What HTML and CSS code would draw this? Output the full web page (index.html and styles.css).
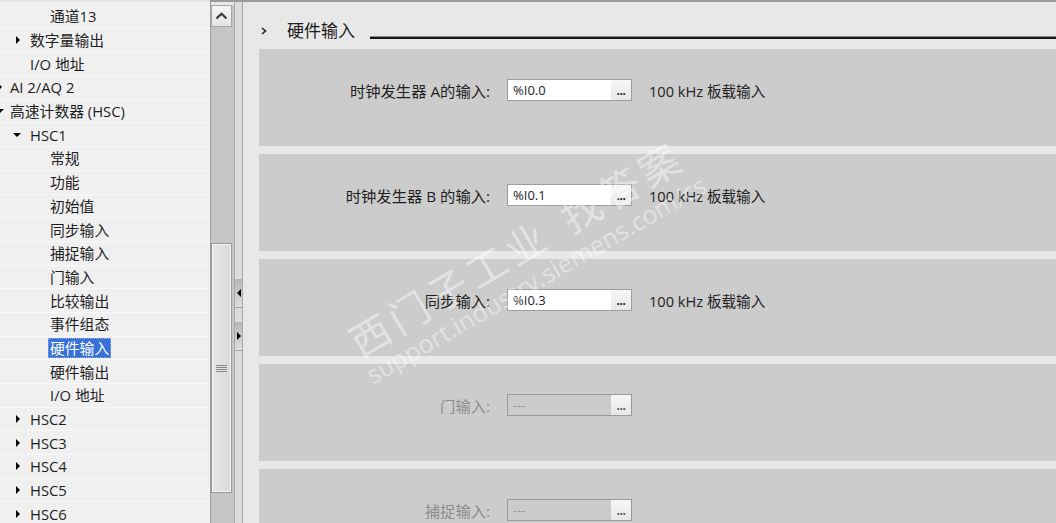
FILE: index.html
```html
<!DOCTYPE html>
<html lang="zh">
<head>
<meta charset="utf-8">
<title>硬件输入</title>
<link rel="stylesheet" href="styles.css">
</head>
<body>
<div class="topbar"><div class="topbar-left"></div><div class="topbar-right"></div></div>
<div class="app">
  <div class="tree">
    <div class="tree-inner">
      <div class="row l2"><span class="tog"></span><span class="txt">通道13</span></div>
      <div class="row l1"><span class="tog"><i class="tri-r"></i></span><span class="txt">数字量输出</span></div>
      <div class="row l1"><span class="tog"></span><span class="txt">I/O 地址</span></div>
      <div class="row l0"><span class="tog"><i class="tri-r"></i></span><span class="txt">AI 2/AQ 2</span></div>
      <div class="row l0"><span class="tog"><i class="tri-d"></i></span><span class="txt">高速计数器 (HSC)</span></div>
      <div class="row l1"><span class="tog"><i class="tri-d"></i></span><span class="txt">HSC1</span></div>
      <div class="row l2"><span class="tog"></span><span class="txt">常规</span></div>
      <div class="row l2"><span class="tog"></span><span class="txt">功能</span></div>
      <div class="row l2"><span class="tog"></span><span class="txt">初始值</span></div>
      <div class="row l2"><span class="tog"></span><span class="txt">同步输入</span></div>
      <div class="row l2"><span class="tog"></span><span class="txt">捕捉输入</span></div>
      <div class="row l2"><span class="tog"></span><span class="txt">门输入</span></div>
      <div class="row l2"><span class="tog"></span><span class="txt">比较输出</span></div>
      <div class="row l2"><span class="tog"></span><span class="txt">事件组态</span></div>
      <div class="row l2"><span class="tog"></span><span class="txt selected">硬件输入</span></div>
      <div class="row l2"><span class="tog"></span><span class="txt">硬件输出</span></div>
      <div class="row l2"><span class="tog"></span><span class="txt">I/O 地址</span></div>
      <div class="row l1"><span class="tog"><i class="tri-r"></i></span><span class="txt">HSC2</span></div>
      <div class="row l1"><span class="tog"><i class="tri-r"></i></span><span class="txt">HSC3</span></div>
      <div class="row l1"><span class="tog"><i class="tri-r"></i></span><span class="txt">HSC4</span></div>
      <div class="row l1"><span class="tog"><i class="tri-r"></i></span><span class="txt">HSC5</span></div>
      <div class="row l1"><span class="tog"><i class="tri-r"></i></span><span class="txt">HSC6</span></div>
    </div>
  </div>
  <div class="vscroll">
    <div class="sb-cap"></div>
    <div class="sb-up"><svg width="13" height="8" viewBox="0 0 13 8"><path d="M1.5 6.5 L6.5 1.8 L11.5 6.5" fill="none" stroke="#3a3a3a" stroke-width="2.2"/></svg></div>
    <div class="sb-gap"></div>
    <div class="sb-thumb"><div class="grip"><span></span><span></span><span></span><span></span></div></div>
  </div>
  <div class="splitter">
    <div class="split-btn"><i class="tri-l"></i></div>
    <div class="split-btn"><i class="tri-r"></i></div>
  </div>
  <div class="content">
    <div class="section-head">
      <svg class="chev" width="6" height="8" viewBox="0 0 6 8"><path d="M1 1 L4.5 4 L1 7" fill="none" stroke="#222" stroke-width="1.6"/></svg>
      <span class="section-title">硬件输入</span>
      <span class="section-line"></span>
    </div>
    <div class="panels">
      <div class="panel">
        <div class="field">
          <span class="label">时钟发生器 A的输入:</span>
          <span class="input"><span class="input-val">%I0.0</span><span class="input-btn">...</span></span>
          <span class="desc">100 kHz 板载输入</span>
        </div>
      </div>
      <div class="panel">
        <div class="field">
          <span class="label">时钟发生器 B 的输入:</span>
          <span class="input"><span class="input-val">%I0.1</span><span class="input-btn">...</span></span>
          <span class="desc">100 kHz 板载输入</span>
        </div>
      </div>
      <div class="panel">
        <div class="field">
          <span class="label">同步输入:</span>
          <span class="input"><span class="input-val">%I0.3</span><span class="input-btn">...</span></span>
          <span class="desc">100 kHz 板载输入</span>
        </div>
      </div>
      <div class="panel">
        <div class="field disabled">
          <span class="label">门输入:</span>
          <span class="input"><span class="input-val">---</span><span class="input-btn">...</span></span>
        </div>
      </div>
      <div class="panel">
        <div class="field disabled">
          <span class="label">捕捉输入:</span>
          <span class="input"><span class="input-val">---</span><span class="input-btn">...</span></span>
        </div>
      </div>
    </div>
  </div>
</div>
<div class="wm-cn">西门子工业<span class="wm-gap"></span>找答案</div>
<div class="wm-en">support.industry.siemens.com/cs</div>
</body>
</html>
```
FILE: styles.css
```css
html, body {
  margin: 0;
  padding: 0;
}
body {
  width: 1056px;
  height: 523px;
  overflow: hidden;
  position: relative;
  background: #e8e8e8;
  font-family: "Open Sans", "Noto Sans CJK SC", sans-serif;
  font-size: 15px;
  color: #1e1e1e;
}
.topbar {
  display: flex;
  height: 2px;
}
.topbar-left {
  width: 210px;
  background: #e4e4e4;
}
.topbar-right {
  flex: 1;
  background: #9a9a9a;
}
.app {
  display: flex;
  height: 521px;
}

/* tree */
.tree {
  width: 210px;
  flex: none;
  background: #f0f0f0;
  overflow: hidden;
  padding-top: 3px;
  box-sizing: border-box;
}
.tree-inner {
  margin-left: -4px;
}
.row {
  height: 23.7px;
  box-sizing: border-box;
  border-bottom: 1px solid #f8f8f8;
  display: flex;
  align-items: center;
  white-space: nowrap;
  line-height: 20px;
}
.row.l1 { padding-left: 20px; }
.row.l2 { padding-left: 40px; }
.tog {
  width: 14px;
  flex: none;
  display: flex;
  align-items: center;
}
.tri-r {
  display: block;
  width: 0;
  height: 0;
  border-left: 4px solid #000;
  border-top: 4px solid transparent;
  border-bottom: 4px solid transparent;
}
.tri-l {
  display: block;
  width: 0;
  height: 0;
  border-right: 4px solid #000;
  border-top: 4px solid transparent;
  border-bottom: 4px solid transparent;
}
.tri-d {
  display: block;
  width: 0;
  height: 0;
  margin-left: -3px;
  border-top: 4px solid #000;
  border-left: 4px solid transparent;
  border-right: 4px solid transparent;
}
.row.l0 .tri-r { margin-left: 2px; }
.row.l0 .tri-d { margin-left: 0; }
.txt {
  padding: 0 2px;
  margin-left: -2px;
  font-size: 14.8px;
}
.txt.selected {
  background: #3771d8;
  color: #fff;
  outline: 1px dotted #9ab0d8;
  outline-offset: -1px;
  line-height: 20px;
}

/* vertical scrollbar */
.vscroll {
  width: 24px;
  flex: none;
  box-sizing: border-box;
  border-left: 1px solid #a0a0a0;
  background: #c6c6c6;
  display: flex;
  flex-direction: column;
}
.sb-cap {
  height: 3px;
  background: #e8e8e8;
}
.sb-up {
  width: 21px;
  height: 22px;
  box-sizing: border-box;
  border: 1px solid #a6a6a6;
  background: linear-gradient(#f6f6f6, #e4e4e4);
  display: flex;
  align-items: center;
  justify-content: center;
}
.sb-gap {
  height: 216px;
}
.sb-thumb {
  width: 21px;
  height: 250px;
  box-sizing: border-box;
  border: 1px solid #9c9c9c;
  box-shadow: inset 0 0 0 1px #f4f4f4;
  background: linear-gradient(90deg, #e8e8e8, #d9d9d9);
  display: flex;
  align-items: center;
  justify-content: center;
}
.grip {
  display: flex;
  flex-direction: column;
  gap: 1px;
}
.grip span {
  display: block;
  width: 11px;
  height: 1px;
  background: #8a8a8a;
}

/* splitter */
.splitter {
  width: 9px;
  flex: none;
  box-sizing: border-box;
  border-left: 1px solid #a8a8a8;
  border-right: 1px solid #a8a8a8;
  background: #dcdcdc;
  padding-top: 277px;
  display: flex;
  flex-direction: column;
  gap: 14px;
}
.split-btn {
  height: 29px;
  box-sizing: border-box;
  border-bottom: 1px solid #a4a4a4;
  background: linear-gradient(#b6b6b6, #dedede);
  display: flex;
  align-items: center;
  padding-left: 2px;
}

/* content */
.content {
  flex: 1;
  background: #e8e8e8;
  padding: 14px 0 0 16px;
  box-sizing: border-box;
  overflow: hidden;
}
.section-head {
  display: flex;
  align-items: center;
  height: 30px;
  padding-left: 2px;
}
.chev {
  flex: none;
}
.section-title {
  margin-left: 20px;
  font-size: 17px;
  line-height: 22px;
  color: #1a1a1a;
}
.section-line {
  flex: 1;
  height: 2px;
  margin-left: 15px;
  margin-top: 12px;
  background: #161616;
  border-top: 1px solid #8c8c8c;
}
.panels {
  margin-top: 3px;
  display: flex;
  flex-direction: column;
  gap: 8px;
}
.panel {
  height: 97px;
  flex: none;
  box-sizing: border-box;
  background: #cccccc;
  padding-top: 30px;
}
.field {
  display: flex;
  align-items: center;
  height: 22px;
  font-size: 15.3px;
  white-space: nowrap;
}
.label {
  width: 231px;
  flex: none;
  text-align: right;
  color: #1e1e1e;
}
.input {
  margin-left: 17px;
  width: 125px;
  height: 22px;
  flex: none;
  box-sizing: border-box;
  border: 1px solid #9e9e9e;
  background: #fff;
  display: flex;
}
.input-val {
  flex: 1;
  padding-left: 5px;
  font-size: 13px;
  line-height: 20px;
  color: #1e1e2e;
}
.input-btn {
  width: 20px;
  flex: none;
  box-sizing: border-box;
  padding-top: 2px;
  background: linear-gradient(#f6f6f6, #e8e8e8);
  font-weight: bold;
  font-size: 12px;
  line-height: 18px;
  text-align: center;
  color: #222;
  letter-spacing: -0.5px;
}
.desc {
  margin-left: 17px;
  color: #222;
  font-size: 14.6px;
}
.field.disabled .label {
  color: #8c8c8c;
}
.field.disabled .input {
  background: #cbcbcb;
  border-color: #9a9a9a;
}
.field.disabled .input-val {
  color: #9a9a9a;
}
.field.disabled .input-btn {
  color: #555;
}

/* watermark */
.wm-cn {
  position: absolute;
  left: 352px;
  top: 324px;
  font-family: "Noto Sans CJK SC", sans-serif;
  font-size: 40px;
  line-height: 40px;
  letter-spacing: 5px;
  color: rgba(255, 255, 255, 0.45);
  transform-origin: 0 50%;
  transform: rotate(-30.5deg);
  white-space: nowrap;
  pointer-events: none;
}
.wm-gap {
  display: inline-block;
  width: 20px;
}
.wm-en {
  position: absolute;
  left: 368px;
  top: 362px;
  font-family: "Open Sans", sans-serif;
  font-size: 25px;
  line-height: 28px;
  color: rgba(255, 255, 255, 0.45);
  transform-origin: 0 50%;
  transform: rotate(-30deg);
  white-space: nowrap;
  pointer-events: none;
}
```
